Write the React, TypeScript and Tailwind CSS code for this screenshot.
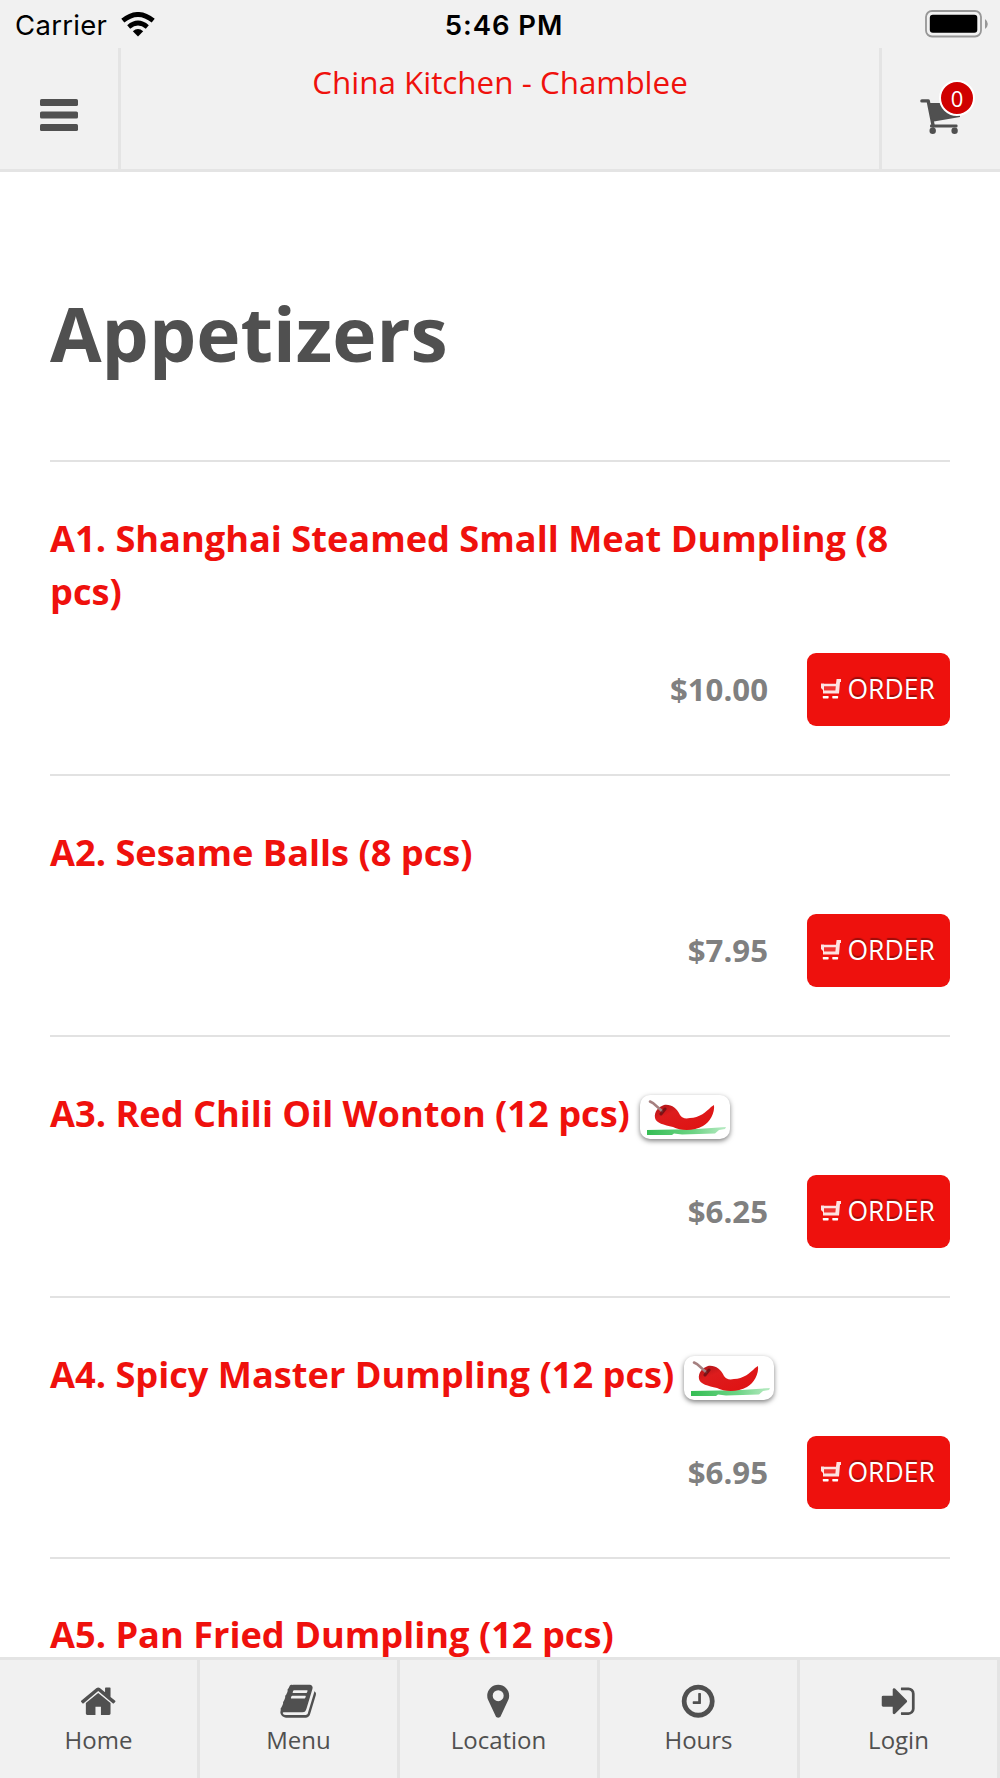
import React from 'react'

interface MenuItem {
  name: string
  price?: string
  spicy?: boolean
}

const items: MenuItem[] = [
  { name: 'A1. Shanghai Steamed Small Meat Dumpling (8 pcs)', price: '$10.00' },
  { name: 'A2. Sesame Balls (8 pcs)', price: '$7.95' },
  { name: 'A3. Red Chili Oil Wonton (12 pcs)', price: '$6.25', spicy: true },
  { name: 'A4. Spicy Master Dumpling (12 pcs)', price: '$6.95', spicy: true },
  { name: 'A5. Pan Fried Dumpling (12 pcs)' }
]

const tabs = [
  {
    label: 'Home',
    path: 'M1472 992v480q0 26-19 45t-45 19h-384v-384h-256v384h-384q-26 0-45-19t-19-45v-480q0-1 .5-3t.5-3l575-474 575 474q1 2 1 6zm223-69l-62 74q-8 9-21 11h-3q-13 0-21-7l-692-577-692 577q-12 8-24 7-13-2-21-11l-62-74q-8-10-7-23.5t11-21.5l719-599q32-26 76-26t76 26l244 204v-195q0-14 9-23t23-9h192q14 0 23 9t9 23v408l219 182q10 8 11 21.5t-7 23.5z'
  },
  {
    label: 'Menu',
    path: 'M1703 478q40 57 18 129l-275 906q-19 64-76.5 107.5t-122.5 43.5h-923q-77 0-148.5-53.5t-99.5-131.5q-24-67-2-127 0-4 3-27t4-37q1-8-3-21.5t-3-19.5q2-11 8-21t16.5-23.5 16.5-23.5q23-38 45-91.5t30-91.5q3-10 .5-30t-.5-28q3-11 17-28t17-23q21-36 42-92t25-90q1-9-2.5-32t.5-28q4-13 22-30.5t22-22.5q19-26 42.5-84.5t27.5-96.5q1-8-3-25.5t-2-26.5q2-8 9-18t18-23 17-21q8-12 16.5-30.5t15-35 16-36 19.5-32 26.5-23.5 36-11.5 47.5 5.5l-1 3q38-9 51-9h761q74 0 114 56t18 130l-274 906q-36 119-71.5 153.5t-128.5 34.5h-869q-27 0-38 15-11 16-1 43 24 70 144 70h923q29 0 56-15.5t35-41.5l300-987q7-22 5-57 38 15 59 43zm-1064 2q-4 13 2 22.5t20 9.5h608q13 0 25.5-9.5t16.5-22.5l21-64q4-13-2-22.5t-20-9.5h-608q-13 0-25.5 9.5t-16.5 22.5zm-83 256q-4 13 2 22.5t20 9.5h608q13 0 25.5-9.5t16.5-22.5l21-64q4-13-2-22.5t-20-9.5h-608q-13 0-25.5 9.5t-16.5 22.5z'
  },
  {
    label: 'Location',
    path: 'M1152 640q0-106-75-181t-181-75-181 75-75 181 75 181 181 75 181-75 75-181zm256 0q0 109-33 179l-364 774q-16 33-47.5 52t-67.5 19-67.5-19-46.5-52l-365-774q-33-70-33-179 0-212 150-362t362-150 362 150 150 362z'
  },
  {
    label: 'Hours',
    path: 'M1024 544v448q0 14-9 23t-23 9h-320q-14 0-23-9t-9-23v-64q0-14 9-23t23-9h224v-352q0-14 9-23t23-9h64q14 0 23 9t9 23zm416 352q0-148-73-273t-198-198-273-73-273 73-198 198-73 273 73 273 198 198 273 73 273-73 198-198 73-273zm224 0q0 209-103 385.5t-279.5 279.5-385.5 103-385.5-103-279.5-279.5-103-385.5 103-385.5 279.5-279.5 385.5-103 385.5 103 279.5 279.5 103 385.5z'
  },
  {
    label: 'Login',
    path: 'M1312 896q0 26-19 45l-544 544q-19 19-45 19t-45-19-19-45v-288h-448q-26 0-45-19t-19-45v-384q0-26 19-45t45-19h448v-288q0-26 19-45t45-19 45 19l544 544q19 19 19 45zm352-352v704q0 119-84.5 203.5t-203.5 84.5h-320q-13 0-22.5-9.5t-9.5-22.5q0-4-1-20t-.5-26.5 3-23.5 10-19.5 20.5-6.5h320q66 0 113-47t47-113v-704q0-66-47-113t-113-47h-312l-11.5-1-11.5-3-8-5.5-7-9-2-13.5q0-4-1-20t-.5-26.5 3-23.5 10-19.5 20.5-6.5h320q119 0 203.5 84.5t84.5 203.5z'
  }
]

function StatusBar() {
  return (
    <div className="h-12 flex items-center justify-between pl-[15px] pr-3 text-black font-['Inter',sans-serif] text-[27.5px] leading-none">
      <div className="w-[300px] flex items-center gap-[14px] pt-1">
        <span className="tracking-[0.3px]">Carrier</span>
        <svg className="w-[34px] h-[25px] -mt-1" viewBox="0 0 34 25">
          <path d="M17 24.5 L11.8 19.2 Q17 15 22.2 19.2 Z" />
          <path d="M7.7 15 Q17 7 26.3 15" fill="none" stroke="#000" strokeWidth="4.6" />
          <path d="M1.8 8.7 Q17 -3.8 32.2 8.7" fill="none" stroke="#000" strokeWidth="4.8" />
        </svg>
      </div>
      <span className="font-semibold tracking-[0.95px] pt-1 pl-[5px]">5:46 PM</span>
      <div className="w-[300px] flex justify-end">
        <svg className="w-[63px] h-[28px]" viewBox="0 0 63 28">
          <rect x="1" y="1" width="55" height="25.5" rx="6" fill="none" stroke="#979797" strokeWidth="1.8" />
          <rect x="4.8" y="4.8" width="47.5" height="18" rx="3" />
          <path d="M60 9 Q62.8 11 62.8 14 Q62.8 17 60 19 Z" fill="#979797" />
        </svg>
      </div>
    </div>
  )
}

function Header() {
  return (
    <header className="h-[172px] shrink-0 bg-[#f1f1f1] border-b-3 border-[#e4e4e4] flex flex-col">
      <StatusBar />
      <div className="flex-1 flex">
        <button className="w-[121px] shrink-0 border-r-3 border-[#e4e4e4] flex items-center justify-center pt-[13px]">
          <svg className="w-[38px] h-8" viewBox="0 0 38 32" fill="#505050">
            <rect width="38" height="7" rx="1.6" />
            <rect y="12.5" width="38" height="7" rx="1.6" />
            <rect y="25" width="38" height="7" rx="1.6" />
          </svg>
        </button>
        <div className="flex-1 pt-[13px] text-center text-[#ef110d] text-[31.4px] leading-[42px]">China Kitchen - Chamblee</div>
        <button className="w-[121px] shrink-0 border-l-3 border-[#e4e4e4] flex items-start pl-[38px] pt-[51px]">
          <span className="relative block">
            <svg className="w-[42px] h-[37px]" viewBox="0 0 42 37" fill="#505050">
              <path d="M1.9 1.9 H8.2 L13.2 27" fill="none" stroke="#505050" strokeWidth="3.4" strokeLinecap="round" strokeLinejoin="round" />
              <path d="M8 4 H40 V18 L12.5 22.8 Z" />
              <rect x="10" y="25.4" width="27.5" height="3.2" rx="1" />
              <circle cx="12.7" cy="31.8" r="3.2" />
              <circle cx="34.6" cy="31.8" r="3.2" />
            </svg>
            <span className="absolute left-[19px] -top-[19px] size-[36px] rounded-full border-2 border-white bg-[#d00000] text-white text-[22px] flex items-center justify-center leading-none">0</span>
          </span>
        </button>
      </div>
    </header>
  )
}

function Chili() {
  return (
    <span className="inline-flex align-top mt-[8.5px] ml-[10px] w-[90px] h-[44px] rounded-[10px] bg-white shadow-[0_2px_5px_rgba(0,0,0,0.5)] items-center justify-center">
      <svg className="w-[82px] h-9" viewBox="0 0 82 36">
        <defs>
          <linearGradient id="grass">
            <stop offset="0" stopColor="#35bd54" />
            <stop offset="0.6" stopColor="#6ed486" />
            <stop offset="1" stopColor="#b9ebc4" />
          </linearGradient>
          <linearGradient id="chili" x1="0" y1="0" x2="1" y2="1">
            <stop offset="0" stopColor="#a81418" />
            <stop offset="0.3" stopColor="#dd1c1d" />
            <stop offset="1" stopColor="#e01010" />
          </linearGradient>
        </defs>
        <path d="M3 31 L30 30.5 L53 30 L82 28 L81 30 L75 31 L71 34.5 L38 35.5 L30 34.5 L28 36 L3 36 Z" fill="url(#grass)" />
        <path d="M11 19 C10 13 14 8 20 6 C27 5 33 9 36 16 C38 19 41 20 46 19 C55 19 62 13 67 8 L70 6 C71 14 66 23 59 27 C50 32 37 32 29 28 C20 26 12 24 11 19 Z" fill="url(#chili)" />
        <path d="M6 2.5 L9 4 L18 12" fill="none" stroke="#a58080" strokeWidth="2.6" strokeLinecap="round" />
        <path d="M17 15 L21 10" stroke="#5c0d10" strokeWidth="3" strokeLinecap="round" opacity="0.7" />
      </svg>
    </span>
  )
}

function OrderButton() {
  return (
    <button className="w-[143px] h-[73px] rounded-[9px] bg-[#ee110d] text-white text-[26.5px] flex items-center pl-[14px] [text-shadow:0_-2px_1px_rgba(0,0,0,0.35)]">
      <svg className="w-[20px] h-[20px] mr-[6.5px]" viewBox="0 0 20 20" fill="#fff">
        <rect x="2" y="7" width="14" height="5" opacity="0.15" />
        <path d="M15.6 0 H20 V3 H19 L18 14.5 H2 V11 L0 9 V4.6 H3 V11.4 H14.4 L14.8 7.2 H3 V4.8 H15 Z" opacity="0.88" />
        <rect x="1.8" y="17" width="5.8" height="2.4" rx="0.6" />
        <rect x="11.3" y="17" width="5.8" height="2.4" rx="0.6" />
      </svg>
      <span className="pt-px">ORDER</span>
    </button>
  )
}

function MenuRow({ item }: { item: MenuItem }) {
  return (
    <div className="border-t-2 border-[#e2e2e2] pt-[49.7px] pb-[48.2px]">
      <h2 className="text-[36.2px] leading-[53.3px] font-bold text-[#ef110d]">
        {item.name}
        {item.spicy && <Chili />}
      </h2>
      {item.price && (
        <div className="mt-[34.7px] flex items-center justify-end gap-[39px]">
          <span className="text-[31.2px] leading-[42px] font-bold text-[#808080]">{item.price}</span>
          <OrderButton />
        </div>
      )}
    </div>
  )
}

function TabBar() {
  return (
    <nav className="h-[121px] shrink-0 bg-[#f1f1f1] border-t-3 border-[#e4e4e4] grid grid-cols-5">
      {tabs.map((tab) => (
        <a key={tab.label} className="border-r-3 border-[#e4e4e4] flex flex-col items-center pt-[22px] text-[#505050]">
          <svg className="size-[38.4px]" viewBox="0 0 1792 1792" fill="currentColor">
            <path d={tab.path} />
          </svg>
          <span className="text-[24px] leading-[32px] mt-1">{tab.label}</span>
        </a>
      ))}
    </nav>
  )
}

export default function App() {
  return (
    <div className="w-[1000px] h-[1778px] overflow-hidden flex flex-col bg-white font-['Open_Sans',sans-serif]">
      <Header />
      <main className="flex-1 min-h-0 overflow-hidden px-[50px]">
        <h1 className="h-[288px] pt-[108px] text-[74.8px] leading-[106px] font-bold text-[#505050]">Appetizers</h1>
        {items.map((item) => (
          <MenuRow key={item.name} item={item} />
        ))}
      </main>
      <TabBar />
    </div>
  )
}
